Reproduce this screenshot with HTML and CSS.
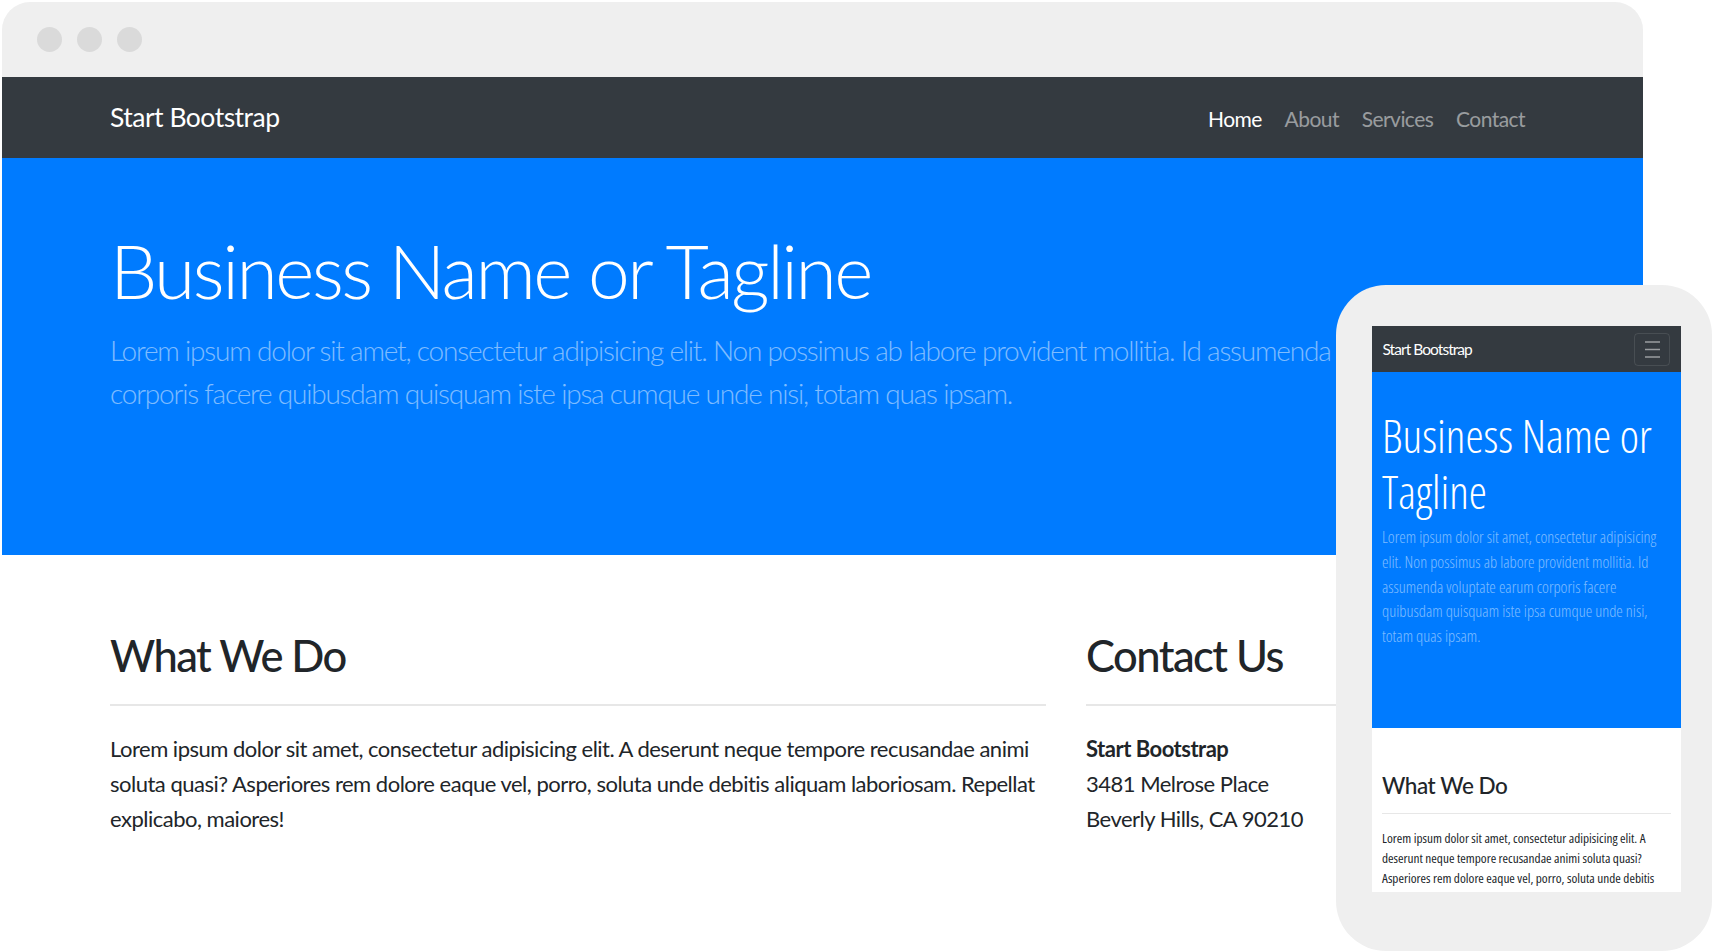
FILE: index.html
```html
<!DOCTYPE html>
<html lang="en">
<head>
<meta charset="utf-8">
<title>Start Bootstrap - Business Frontpage</title>
<link rel="stylesheet" href="styles.css">
</head>
<body>
<div class="stage">
  <div class="browser">
    <div class="chrome">
      <span class="dot"></span><span class="dot"></span><span class="dot"></span>
    </div>
    <nav class="navbar">
      <div class="container nav-inner">
        <a class="brand">Start Bootstrap</a>
        <ul class="nav-links">
          <li><a class="active">Home</a></li>
          <li><a>About</a></li>
          <li><a>Services</a></li>
          <li><a>Contact</a></li>
        </ul>
      </div>
    </nav>
    <header class="hero">
      <div class="container">
        <h1 class="display">Business Name or Tagline</h1>
        <p class="lead">Lorem ipsum dolor sit amet, consectetur adipisicing elit. Non possimus ab labore provident mollitia. Id assumenda voluptate earum corporis facere quibusdam quisquam iste ipsa cumque unde nisi, totam quas ipsam.</p>
      </div>
    </header>
    <section class="content">
      <div class="container grid">
        <div class="col">
          <h2>What We Do</h2>
          <hr>
          <p>Lorem ipsum dolor sit amet, consectetur adipisicing elit. A deserunt neque tempore recusandae animi soluta quasi? Asperiores rem dolore eaque vel, porro, soluta unde debitis aliquam laboriosam. Repellat explicabo, maiores!</p>
        </div>
        <div class="col">
          <h2>Contact Us</h2>
          <hr>
          <address><strong>Start Bootstrap</strong><br>3481 Melrose Place<br>Beverly Hills, CA 90210</address>
        </div>
      </div>
    </section>
  </div>

  <div class="phone">
    <div class="screen">
      <nav class="m-navbar">
        <span class="m-brand">Start Bootstrap</span>
        <span class="m-toggler">
          <svg width="15" height="17" viewBox="0 0 15 17" aria-hidden="true">
            <path d="M0 1H15M0 8.5H15M0 16H15" stroke="rgba(255,255,255,0.5)" stroke-width="1.3" fill="none"/>
          </svg>
        </span>
      </nav>
      <header class="m-hero">
        <h1>Business Name or Tagline</h1>
        <p>Lorem ipsum dolor sit amet, consectetur adipisicing elit. Non possimus ab labore provident mollitia. Id assumenda voluptate earum corporis facere quibusdam quisquam iste ipsa cumque unde nisi, totam quas ipsam.</p>
      </header>
      <section class="m-content">
        <h2>What We Do</h2>
        <hr>
        <p>Lorem ipsum dolor sit amet, consectetur adipisicing elit. A deserunt neque tempore recusandae animi soluta quasi? Asperiores rem dolore eaque vel, porro, soluta unde debitis aliquam laboriosam. Repellat explicabo, maiores!</p>
      </section>
    </div>
  </div>
</div>
</body>
</html>
```

FILE: styles.css
```css
* { box-sizing: border-box; }
html, body { margin: 0; padding: 0; }
body {
  background: #fff;
  font-family: "Lato", "Open Sans", sans-serif;
  color: #212529;
}
a { text-decoration: none; }

.stage {
  position: relative;
  width: 1712px;
  height: 952px;
  overflow: hidden;
}

/* ---------- desktop browser mockup ---------- */
.browser {
  margin: 2px 0 0 2px;
  width: 1641px;
  height: 950px;
  border-radius: 28px 28px 0 0;
  overflow: hidden;
  background: #fff;
}
.chrome {
  height: 75px;
  background: #efefef;
  display: flex;
  align-items: center;
  gap: 15px;
  padding-left: 34.5px;
}
.dot {
  width: 25px;
  height: 25px;
  border-radius: 50%;
  background: #dadada;
}
.container {
  width: 1425px;
  margin: 0 auto;
}
.navbar {
  height: 81px;
  background: #343a40;
}
.nav-inner {
  height: 100%;
  display: flex;
  align-items: center;
  justify-content: space-between;
}
.brand {
  font-size: 26.5px;
  letter-spacing: -0.5px;
  line-height: 1.5;
  color: #fff;
}
.nav-links {
  display: flex;
  list-style: none;
  margin: 0;
  padding: 2px 0 0;
}
.nav-links a {
  display: block;
  padding: 0 11.4px;
  font-size: 21px;
  letter-spacing: -0.55px;
  line-height: 1.5;
  color: rgba(255, 255, 255, 0.5);
}
.nav-links a.active { color: #fff; }
.nav-links li:last-child a { padding-right: 10px; }

.hero {
  background: #007bff;
  height: 397px;
  padding-top: 64px;
}
.display {
  margin: 0 0 10.7px;
  font-size: 75px;
  font-weight: 300;
  letter-spacing: -2.45px;
  line-height: 96px;
  color: #fff;
}
.lead {
  margin: 0;
  font-size: 28px;
  font-weight: 300;
  letter-spacing: -1.2px;
  line-height: 43px;
  color: rgba(255, 255, 255, 0.5);
}

.content { padding-top: 72.7px; }
.grid {
  display: grid;
  grid-template-columns: 936px 1fr;
  column-gap: 40px;
}
h2 {
  margin: 0;
  font-size: 43.5px;
  font-weight: 500;
  letter-spacing: -1.55px;
  line-height: 54px;
}
hr {
  margin: 22.5px 0 25px;
  border: 0;
  border-top: 2px solid #e7e7e7;
}
.col p, .col address {
  margin: 0;
  font-size: 22px;
  letter-spacing: -0.5px;
  line-height: 35px;
  font-style: normal;
}
.col strong { font-weight: 700; }

/* ---------- phone mockup ---------- */
.phone {
  position: absolute;
  left: 1336px;
  top: 285px;
  width: 376px;
  height: 666px;
  border-radius: 50px;
  background: #efefef;
  padding: 41px 0 0 36px;
}
.screen {
  width: 309px;
  height: 566px;
  overflow: hidden;
  background: #fff;
}
.m-navbar {
  height: 46px;
  background: #343a40;
  display: flex;
  align-items: center;
  justify-content: space-between;
  padding: 0 11px 0 10.5px;
}
.m-brand {
  font-size: 15.5px;
  letter-spacing: -0.95px;
  color: #fff;
}
.m-toggler {
  width: 36px;
  height: 33px;
  border: 1px solid rgba(255, 255, 255, 0.1);
  border-radius: 4px;
  display: flex;
  align-items: center;
  justify-content: center;
}
.m-hero {
  background: #007bff;
  height: 356px;
  padding: 34.85px 10px 0;
  font-family: "Open Sans", "Lato", sans-serif;
  font-stretch: 75%;
}
.m-hero h1 {
  margin: 0 0 6.65px;
  font-size: 46px;
  font-weight: 300;
  line-height: 56px;
  color: #fff;
}
.m-hero p {
  margin: 0;
  font-size: 16.4px;
  font-weight: 300;
  line-height: 24.6px;
  color: rgba(255, 255, 255, 0.5);
}
.m-content { padding: 44.6px 10px 0; }
.m-content h2 {
  font-size: 22.5px;
  letter-spacing: -0.45px;
  line-height: 26.4px;
}
.m-content hr {
  margin: 14.3px 0 14.9px;
  border-top: 1px solid #e7e7e7;
}
.m-content p {
  margin: 0;
  font-family: "Open Sans", "Lato", sans-serif;
  font-stretch: 75%;
  font-size: 13.3px;
  line-height: 19.8px;
}
```
